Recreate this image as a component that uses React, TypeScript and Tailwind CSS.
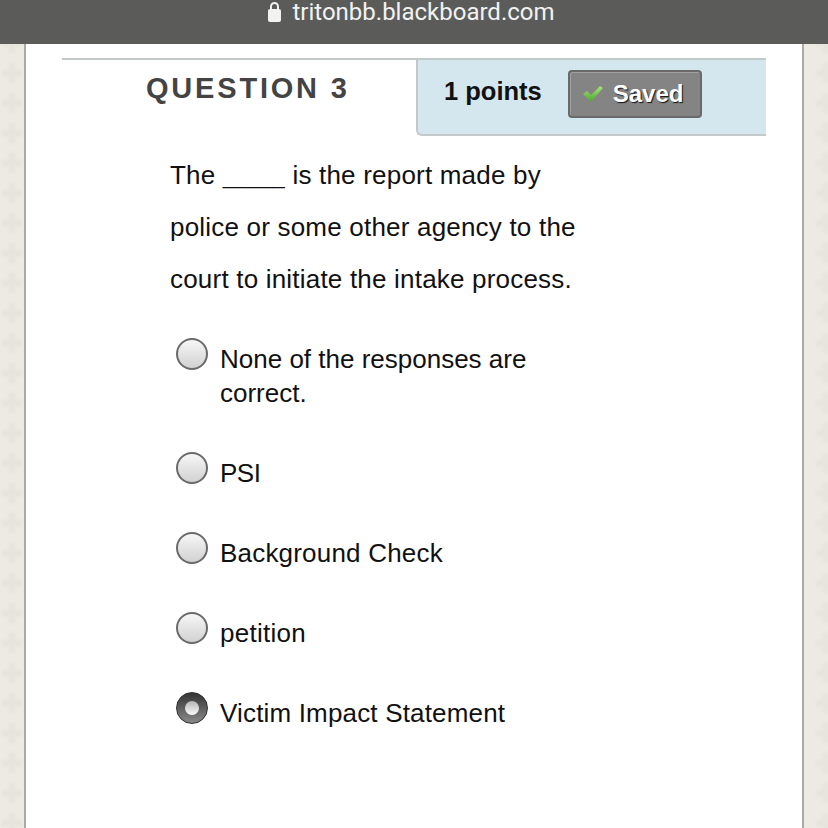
const OPTIONS = [
  { key: "none", label: "None of the responses are correct.", rowClass: "h-[114px]", textClass: "tracking-normal", selected: false },
  { key: "psi", label: "PSI", rowClass: "h-[80px]", textClass: "tracking-[-0.5px]", selected: false },
  { key: "background", label: "Background Check", rowClass: "h-[80px]", textClass: "tracking-[0.2px]", selected: false },
  { key: "petition", label: "petition", rowClass: "h-[80px]", textClass: "tracking-[0.25px]", selected: false },
  { key: "victim", label: "Victim Impact Statement", rowClass: "h-[80px]", textClass: "tracking-[0.17px]", selected: true },
];

const PLUSES = Array.from({ length: 28 }, (_, i) => i);

// faint plus shapes of the page wallpaper
const Wallpaper = ({ className, plusClass }: { className: string; plusClass: string }) => (
  <div className={`flex flex-col gap-[10px] bg-[#eceae3] overflow-hidden ${className}`}>
    {PLUSES.map((i) => (
      <svg key={i} width="20" height="20" viewBox="0 0 16 16" className={`shrink-0 blur-[1px] first:-mt-[11px] ${plusClass}`}>
        <path d="M5.500 0h5v5.500H16v5h-5.500V16h-5v-5.500H0v-5h5.500z" fill="#e6e4dc" />
      </svg>
    ))}
  </div>
);

const Radio = ({ selected }: { selected: boolean }) =>
  selected ? (
    <div className="w-8 h-8 rounded-full border border-[#2f2f2f] bg-[linear-gradient(#333333,#8a8a8a)] flex items-center justify-center">
      <div className="w-[14px] h-[14px] rounded-full bg-[linear-gradient(#b5b5b5,#fbfbfb)]" />
    </div>
  ) : (
    <div className="w-8 h-8 rounded-full border-2 border-[#6a6a6a] bg-[linear-gradient(#f6f6f6,#d2d2d2)]" />
  );

export default function App() {
  return (
    <div className="w-[828px] h-[828px] overflow-hidden bg-white font-['Liberation_Sans',sans-serif]">
      {/* Safari address bar */}
      <div className="h-11 bg-[#5b5c5a] flex justify-center gap-[11px] text-[#f2f2f2] text-2xl leading-[24px] font-['Roboto',sans-serif] pr-[5px]">
        <svg width="13" height="21" viewBox="0 0 13 21" className="mt-[1px]">
          <path d="M3 9V5.500a3.500 3.500 0 0 1 7 0V9" fill="none" stroke="#f2f2f2" strokeWidth="2" />
          <rect x="0" y="8" width="13" height="13" rx="2" fill="#f2f2f2" />
        </svg>
        <span>tritonbb.blackboard.com</span>
      </div>

      <div className="flex h-[784px]">
        <Wallpaper className="w-6 items-center" plusClass="" />

        <main className="w-[780px] border-x-2 border-[#a9a9a6] pl-9 pt-[14px]">
          {/* Question header */}
          <div className="flex w-[704px] h-[78px]">
            <div className="w-[354px] border-t-2 border-[#c3c8cb] pl-[84px] pt-[12px]">
              <h2 className="text-[#444] text-[29px] leading-[32px] font-bold tracking-[2.8px]">QUESTION 3</h2>
            </div>
            <div className="flex-1 bg-[#d5e7ee] border-t-2 border-l-2 border-b-2 border-[#c3c8cb] rounded-bl-md flex items-start pl-[26px] pt-[10px]">
              <span className="text-[#111] text-[25.500px] leading-[42px] font-bold mr-[26px]">1 points</span>
              <div className="w-[134px] h-12 bg-[#848484] border-2 border-[#6a6a6a] rounded shadow-[inset_1px_1px_0_#a0a0a0] flex items-center pl-[12px] gap-[9px]">
                <svg width="22" height="20" viewBox="0 0 22 20">
                  <defs>
                    <linearGradient id="check" x1="0" y1="0" x2="0" y2="1">
                      <stop offset="0" stopColor="#a5e57a" />
                      <stop offset="1" stopColor="#4ea52f" />
                    </linearGradient>
                  </defs>
                  <path d="M1 10l4-3 4 4 9-9 3 2L9 18z" fill="url(#check)" />
                </svg>
                <span className="text-white text-[24px] leading-none font-bold [text-shadow:1px_1px_1px_#111]">Saved</span>
              </div>
            </div>
          </div>

          {/* Question text */}
          <p className="ml-[108px] mt-[13px] w-[420px] text-[#111] text-[26px] leading-[52px] tracking-[0.2px]">
            The <span className="text-[22px] leading-none">_____</span> is the report made by police or some other agency to the court to initiate the intake process.
          </p>

          {/* Answers */}
          <div className="pl-[114px] pt-[29px]">
            {OPTIONS.map((option) => (
              <div key={option.key} className={`flex items-start ${option.rowClass}`}>
                <div className="w-11 shrink-0 pt-[4px]">
                  <Radio selected={option.selected} />
                </div>
                <p className={`w-[340px] pt-[8px] text-[#111] text-[26px] leading-[34px] ${option.textClass}`}>{option.label}</p>
              </div>
            ))}
          </div>
        </main>

        <Wallpaper className="w-6 items-end" plusClass="-mr-[8px]" />
      </div>
    </div>
  );
}
